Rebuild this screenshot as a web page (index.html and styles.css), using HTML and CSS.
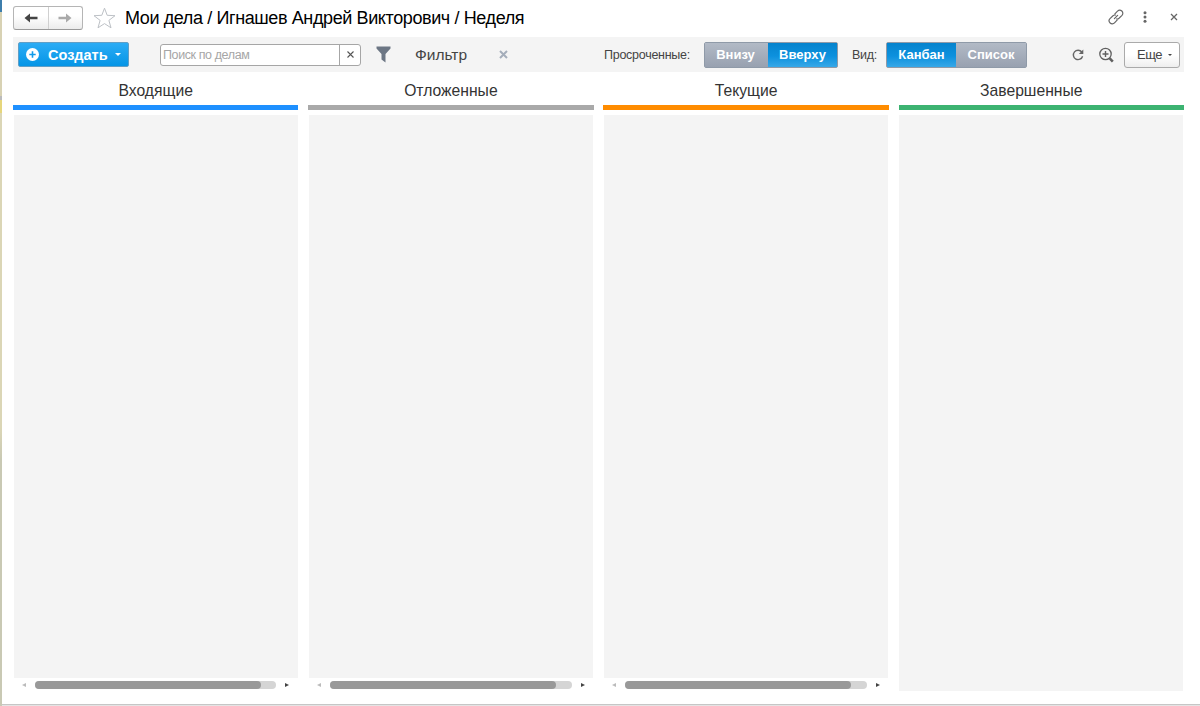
FILE: index.html
```
<!DOCTYPE html>
<html lang="ru">
<head>
  <meta charset="UTF-8" />
  <title>Мои дела</title>
  <link rel="stylesheet" href="styles.css">
</head>
<body>
  <div class="edge"></div>
  <div class="window">
    <header class="titlebar">
      <div class="nav">
        <button class="nav-btn" aria-label="Назад">
          <svg width="14" height="10" viewBox="0 0 14 10"><path d="M0.5 5L6 0.5V3.8H13.5V6.2H6V9.5Z" fill="#444"/></svg>
        </button>
        <button class="nav-btn" aria-label="Вперед">
          <svg width="14" height="10" viewBox="0 0 14 10"><path d="M13.5 5L8 0.5V3.8H0.5V6.2H8V9.5Z" fill="#aaa"/></svg>
        </button>
      </div>
      <svg class="star" width="23" height="22" viewBox="0 0 23 22"><path d="M11.5 1.2L14.2 8.3L22 8.7L15.9 13.4L18 20.8L11.5 16.6L5 20.8L7.1 13.4L1 8.7L8.8 8.3Z" fill="#fff" stroke="#bdc1c6"/></svg>
      <h1 class="title">Мои дела / Игнашев Андрей Викторович / Неделя</h1>
      <div class="window-icons">
        <svg width="16" height="16" viewBox="0 0 16 16" fill="none" stroke="#666" stroke-width="1.2" stroke-linecap="round"><path d="M6.9 4.8L9.5 2.2A2.9 2.9 0 0 1 14 6.4L11 9.3Q9.8 10.3 8.7 9.9M9.1 11.2L6.5 13.8A2.9 2.9 0 0 1 2 9.6L5 6.7Q6.2 5.7 7.3 6.1M6.4 9.6L9.6 6.4"/></svg>
        <svg class="dots" width="4" height="12" viewBox="0 0 4 12" fill="#666"><circle cx="2" cy="1.7" r="1.5"/><circle cx="2" cy="6" r="1.5"/><circle cx="2" cy="10.3" r="1.5"/></svg>
        <svg class="close" width="8" height="8" viewBox="0 0 8 8" stroke="#666" stroke-width="1.3"><path d="M1 1L7 7M7 1L1 7"/></svg>
      </div>
    </header>

    <div class="toolbar">
      <button class="create">
        <svg width="13" height="13" viewBox="0 0 13 13"><circle cx="6.5" cy="6.5" r="6.5" fill="#fff"/><path d="M6.5 3.3V9.7M3.3 6.5H9.7" stroke="#109bea" stroke-width="1.6"/></svg>
        <span class="create-text">Создать</span>
        <span class="caret"></span>
      </button>
      <div class="search">
        <span class="search-input">Поиск по делам</span>
        <span class="search-clear"><svg width="7" height="7" viewBox="0 0 7 7" stroke="#555" stroke-width="1.1"><path d="M0.5 0.5L6.5 6.5M6.5 0.5L0.5 6.5"/></svg></span>
      </div>
      <svg class="funnel" width="15" height="17" viewBox="0 0 15 17"><path d="M0.5 0.5H14.5V2.5L9.5 8V16.5L5.5 13.5V8L0.5 2.5Z" fill="#6c7684"/></svg>
      <span class="filter">Фильтр</span>
      <svg class="filter-clear" width="9" height="9" viewBox="0 0 9 9" stroke="#a4adba" stroke-width="2"><path d="M1 1L8 8M8 1L1 8"/></svg>

      <span class="label label-overdue">Просроченные:</span>
      <div class="switch">
        <button class="switch-btn w-down">Внизу</button>
        <button class="switch-btn w-up active">Вверху</button>
      </div>
      <span class="label label-view">Вид:</span>
      <div class="switch">
        <button class="switch-btn w-kanban active">Канбан</button>
        <button class="switch-btn w-list">Список</button>
      </div>
      <div class="tools">
        <svg width="12" height="12" viewBox="0 0 12 12"><path d="M9.8 3A4.7 4.7 0 1 0 10.6 7.2" fill="none" stroke="#666" stroke-width="1.4"/><path d="M11.3 0.5V5H6.8Z" fill="#666"/></svg>
        <svg class="zoom" width="15" height="16" viewBox="0 0 15 16" fill="none" stroke="#606060"><circle cx="6.5" cy="7" r="5.7" stroke-width="1.3"/><path d="M6.5 4V10M3.5 7H9.5" stroke-width="1.4"/><path d="M10.5 11.2L13.8 14.6" stroke-width="2.6"/></svg>
        <button class="more"><span class="more-text">Еще</span><span class="caret caret-dark"></span></button>
      </div>
    </div>

    <main class="board">
      <section class="column">
        <h2 class="column-title">Входящие</h2>
        <div class="line line-blue"></div>
        <div class="cards"></div>
        <div class="scroll"><i class="arrow-left"></i><div class="track"><div class="thumb"></div></div><i class="arrow-right"></i></div>
      </section>
      <section class="column">
        <h2 class="column-title">Отложенные</h2>
        <div class="line line-gray"></div>
        <div class="cards"></div>
        <div class="scroll"><i class="arrow-left"></i><div class="track"><div class="thumb"></div></div><i class="arrow-right"></i></div>
      </section>
      <section class="column">
        <h2 class="column-title">Текущие</h2>
        <div class="line line-orange"></div>
        <div class="cards"></div>
        <div class="scroll"><i class="arrow-left"></i><div class="track"><div class="thumb"></div></div><i class="arrow-right"></i></div>
      </section>
      <section class="column column-done">
        <h2 class="column-title">Завершенные</h2>
        <div class="line line-green"></div>
        <div class="cards"></div>
      </section>
    </main>
  </div>
</body>
</html>
```
FILE: styles.css
```
* {
  box-sizing: border-box;
}
body {
  margin: 0;
  height: 706px;
  display: flex;
  overflow: hidden;
  background: #e4e4e4;
  font-family: "Liberation Sans", Arial, sans-serif;
  color: #333;
}
button {
  font-family: inherit;
  padding: 0;
  margin: 0;
}
svg {
  display: block;
  flex: none;
}
.edge {
  width: 2px;
  background: linear-gradient(#3e7eac 12px, #d8d2b4 12px, #d8d2b4 96px, #bbb 96px, #bbb 100px, #e6d67c 100px, #e6d67c 113px, #dbd6b6 113px, #dbd6b6 428px, #c9c9b4 460px);
}
.window {
  flex: 1;
  display: flex;
  flex-direction: column;
  height: 705px;
  padding: 0 16px 13px 11px;
  border-bottom: 1px solid #c6c6c6;
  background: #fff;
}

/* title row */
.titlebar {
  height: 37px;
  display: flex;
  align-items: flex-start;
}
.nav {
  display: flex;
  width: 70px;
  height: 24px;
  margin-top: 6px;
  border: 1px solid #b5b5b5;
  border-bottom-color: #999;
  border-radius: 3px;
  background: linear-gradient(#fff 40%, #ececec);
}
.nav-btn {
  flex: 1;
  display: flex;
  align-items: center;
  justify-content: center;
  border: 0;
  background: none;
}
.nav-btn + .nav-btn {
  border-left: 1px solid #d0d0d0;
}
.star {
  margin: 7px 0 0 10px;
}
.title {
  margin: 8px 0 0 9px;
  font-size: 18px;
  line-height: 21px;
  font-weight: normal;
  color: #000;
  white-space: nowrap;
  letter-spacing: -0.39px;
}
.window-icons {
  display: flex;
  align-items: center;
  margin: 9px 6px 0 auto;
}
.dots {
  margin-left: 19px;
}
.close {
  margin-left: 23px;
}

/* toolbar */
.toolbar {
  height: 35px;
  display: flex;
  align-items: center;
  background: #f4f4f4;
  padding: 0 4px 0 5px;
}
.create {
  width: 111px;
  height: 25px;
  display: flex;
  align-items: center;
  padding-left: 7px;
  border: 1px solid #5f9fc7;
  border-radius: 2px;
  background: linear-gradient(#2bacf5, #0595e6);
  color: #fff;
}
.create-text {
  width: 60px;
  margin: 0 7px 0 9px;
  font-size: 14.5px;
  font-weight: bold;
  line-height: 18px;
  text-align: left;
}
.caret {
  border: 3px solid transparent;
  border-top-color: #fff;
  border-bottom: 0;
}
.search {
  display: flex;
  width: 201px;
  height: 22px;
  margin-left: 31px;
  border: 1px solid #a6a6a6;
  border-radius: 3px;
  background: #fff;
}
.search-input {
  flex: 1;
  padding-left: 2px;
  font-size: 12.5px;
  line-height: 21px;
  letter-spacing: -0.4px;
  color: #a6a6a6;
}
.search-clear {
  width: 21px;
  display: flex;
  align-items: center;
  justify-content: center;
  border-left: 1px solid #a6a6a6;
}
.funnel {
  margin-left: 15px;
}
.filter {
  width: 52px;
  margin-left: 24px;
  font-size: 15.5px;
  line-height: 20px;
  color: #444;
}
.filter-clear {
  margin-left: 32px;
}
.label {
  font-size: 12.5px;
  line-height: 20px;
  letter-spacing: -0.27px;
  color: #444;
  white-space: nowrap;
}
.label-overdue {
  width: 87px;
  margin-left: 96px;
}
.label-view {
  width: 25px;
  margin: 0 9px 0 14px;
}
.switch {
  display: flex;
  height: 26px;
  border: 1px solid #8f9aa8;
  border-radius: 2px;
}
.label-overdue + .switch {
  margin-left: 13px;
}
.switch-btn {
  border: 0;
  background: linear-gradient(#b2bac6, #98a1b0);
  color: #fff;
  font-size: 13px;
  font-weight: bold;
  line-height: 22px;
}
.switch-btn.active {
  background: linear-gradient(#0583cd, #0d91de 55%, #37a8e8);
}
.w-down {
  width: 63px;
  padding-right: 2px;
}
.w-up {
  width: 69px;
}
.w-kanban {
  width: 69px;
}
.w-list {
  width: 70px;
}
.tools {
  display: flex;
  align-items: center;
  margin-left: auto;
}
.zoom {
  margin-left: 15px;
}
.more {
  width: 56px;
  height: 26px;
  display: flex;
  align-items: center;
  margin-left: 10px;
  padding-left: 12px;
  border: 1px solid #aaa;
  border-radius: 3px;
  background: linear-gradient(#fff 50%, #eee);
  color: #444;
}
.more-text {
  width: 24px;
  margin-right: 7px;
  font-size: 13px;
  line-height: 20px;
  letter-spacing: -0.5px;
}
.caret-dark {
  border-width: 2.5px;
  border-bottom: 0;
  border-top-color: #444;
}

/* kanban */
.board {
  flex: 1;
  display: grid;
  grid-template-columns: repeat(4, 1fr);
  gap: 9.8px;
}
.column {
  display: flex;
  flex-direction: column;
}
.column-title {
  margin: 0;
  height: 33px;
  font-size: 15.7px;
  line-height: 37px;
  font-weight: normal;
  text-align: center;
  color: #333;
}
.column-done .column-title {
  padding-right: 20px;
}
.line {
  height: 5px;
  margin-bottom: 5px;
}
.line-blue {
  background: #1e90ff;
}
.line-gray {
  background: #a9a9a9;
}
.line-orange {
  background: #ff8c00;
}
.line-green {
  background: #3cb371;
}
.cards {
  flex: 1;
  margin: 0 0.7px;
  background: #f4f4f4;
}
.scroll {
  height: 13px;
  display: flex;
  align-items: center;
  padding: 0 9px;
}
.track {
  flex: 1;
  height: 8px;
  margin: 0 9px;
  border-radius: 4px;
  background: #d5d5d5;
}
.thumb {
  width: 226px;
  height: 8px;
  border-radius: 4px;
  background: #999;
}
.arrow-left,
.arrow-right {
  border: 2px solid transparent;
}
.arrow-left {
  border-left: 0;
  border-right: 4px solid #bbb;
}
.arrow-right {
  border-right: 0;
  border-left: 4px solid #444;
}
```
